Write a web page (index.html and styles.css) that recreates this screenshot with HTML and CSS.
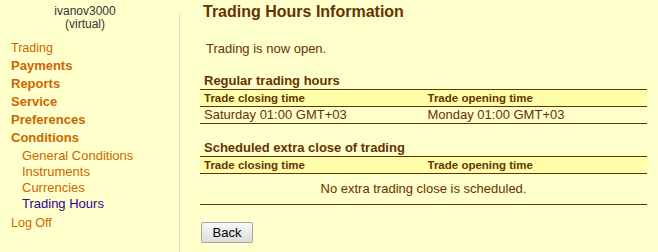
FILE: index.html
```html
<!DOCTYPE html>
<html>
<head>
<meta charset="utf-8">
<title>Trading Hours Information</title>
<link rel="stylesheet" href="styles.css">
</head>
<body>
<div class="page">
  <aside class="sidebar">
    <div class="user">ivanov3000<br>(virtual)</div>
    <nav class="menu">
      <a class="item plain" href="#">Trading</a>
      <a class="item" href="#">Payments</a>
      <a class="item" href="#">Reports</a>
      <a class="item" href="#">Service</a>
      <a class="item" href="#">Preferences</a>
      <a class="item" href="#">Conditions</a>
      <div class="sub">
        <a class="subitem" href="#">General Conditions</a>
        <a class="subitem" href="#">Instruments</a>
        <a class="subitem" href="#">Currencies</a>
        <a class="subitem current" href="#">Trading Hours</a>
      </div>
      <a class="item plain" href="#">Log Off</a>
    </nav>
  </aside>
  <div class="divider"></div>
  <main class="main">
    <h1 class="title">Trading Hours Information</h1>
    <p class="status">Trading is now open.</p>

    <h2 class="section">Regular trading hours</h2>
    <div class="table">
      <div class="row head">
        <div class="cell">Trade closing time</div>
        <div class="cell">Trade opening time</div>
      </div>
      <div class="row">
        <div class="cell">Saturday 01:00 GMT+03</div>
        <div class="cell">Monday 01:00 GMT+03</div>
      </div>
    </div>

    <h2 class="section">Scheduled extra close of trading</h2>
    <div class="table">
      <div class="row head">
        <div class="cell">Trade closing time</div>
        <div class="cell">Trade opening time</div>
      </div>
      <div class="row empty">
        <div class="cell wide">No extra trading close is scheduled.</div>
      </div>
    </div>

    <button class="back" type="button">Back</button>
  </main>
</div>
</body>
</html>
```

FILE: styles.css
```css
html, body {
  margin: 0;
  padding: 0;
  background: #ffffcc;
  font-family: "Liberation Sans", Arial, sans-serif;
  color: #663300;
}

.page {
  display: flex;
  min-height: 252px;
}

.sidebar {
  width: 170px;
  padding: 5px 9px 0 0;
  flex: none;
}

.user {
  text-align: center;
  font-size: 12px;
  line-height: 13px;
  color: #333333;
}

.menu {
  display: flex;
  flex-direction: column;
  margin-top: 8px;
  padding-left: 11px;
}

.item {
  font-size: 13px;
  line-height: 18px;
  font-weight: bold;
  color: #cc6600;
  text-decoration: none;
}

.item.plain {
  font-weight: normal;
  font-size: 12.5px;
}

.sub {
  display: flex;
  flex-direction: column;
  padding: 1px 0 2px 11px;
}

.subitem {
  font-size: 13px;
  line-height: 16px;
  color: #cc6600;
  text-decoration: none;
}

.subitem.current {
  color: #330099;
}

.divider {
  width: 1px;
  margin-top: 13px;
  background: #e9dfae;
  flex: none;
}

.main {
  flex: 1;
  padding: 2px 11px 0 20px;
}

.title {
  margin: 0 0 0 3px;
  font-size: 16px;
  line-height: 19px;
  font-weight: bold;
  color: #663300;
}

.status {
  margin: 20px 0 0 6px;
  font-size: 13px;
  line-height: 16px;
}

.section {
  margin: 16px 0 0 0;
  padding-left: 4px;
  font-size: 13px;
  line-height: 16px;
  font-weight: bold;
}

.table {
  border-top: 1px solid #663300;
}

.row {
  display: grid;
  grid-template-columns: 1fr 1fr;
  border-bottom: 1px solid #663300;
  font-size: 13px;
  line-height: 16px;
}

.row.head {
  background: #ffffaa;
  font-size: 11.5px;
  font-weight: bold;
}

.cell {
  padding: 0 4px;
}

.row.empty {
  line-height: 30px;
}

.cell.wide {
  grid-column: 1 / 3;
  text-align: center;
}

.back {
  margin: 17px 0 0 1px;
  width: 52px;
  height: 21px;
  padding: 0;
  border: 1px solid #a6a6a6;
  border-radius: 2px;
  background: linear-gradient(#f7f7f7, #dddddd);
  font-family: "Liberation Sans", Arial, sans-serif;
  font-size: 13px;
  color: #000000;
}
```
